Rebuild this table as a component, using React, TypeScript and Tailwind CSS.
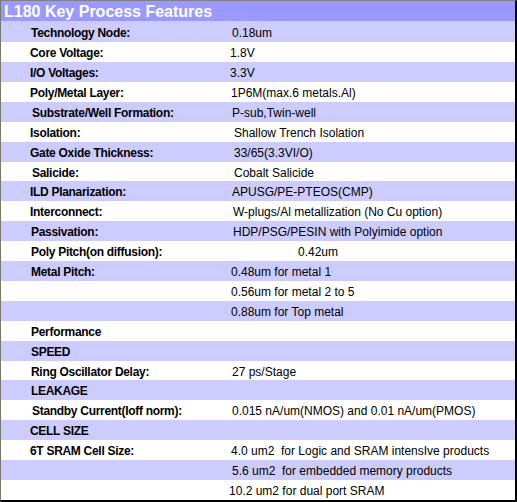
type Row = {
  label?: string;
  value?: string;
  h: string;
  lx: string;
  vx: string;
};

const rows: Row[] = [
  { label: "Technology Node:", value: "0.18um", h: "h-[21px]", lx: "pl-[30px]", vx: "pl-[2px]" },
  { label: "Core Voltage:", value: "1.8V", h: "h-[20px]", lx: "pl-[29px]", vx: "pl-0" },
  { label: "I/O Voltages:", value: "3.3V", h: "h-[20px]", lx: "pl-[29px]", vx: "pl-0" },
  { label: "Poly/Metal Layer:", value: "1P6M(max.6 metals.Al)", h: "h-[20px]", lx: "pl-[29px]", vx: "pl-[1px]" },
  { label: "Substrate/Well Formation:", value: "P-sub,Twin-well", h: "h-[20px]", lx: "pl-[31px]", vx: "pl-[2px]" },
  { label: "Isolation:", value: "Shallow Trench Isolation", h: "h-[20px]", lx: "pl-[29px]", vx: "pl-[4px]" },
  { label: "Gate Oxide Thickness:", value: "33/65(3.3VI/O)", h: "h-[20px]", lx: "pl-[29px]", vx: "pl-[4px]" },
  { label: "Salicide:", value: "Cobalt Salicide", h: "h-[19px]", lx: "pl-[31px]", vx: "pl-[4px]" },
  { label: "ILD Planarization:", value: "APUSG/PE-PTEOS(CMP)", h: "h-[20px]", lx: "pl-[29px]", vx: "pl-[2px]" },
  { label: "Interconnect:", value: "W-plugs/Al metallization (No Cu option)", h: "h-[20px]", lx: "pl-[29px]", vx: "pl-[3px]" },
  { label: "Passivation:", value: "HDP/PSG/PESIN with Polyimide option", h: "h-[20px]", lx: "pl-[30px]", vx: "pl-[3px]" },
  { label: "Poly Pitch(on diffusion):", value: "0.42um", h: "h-[20px]", lx: "pl-[30px]", vx: "pl-[68px]" },
  { label: "Metal Pitch:", value: "0.48um for metal 1", h: "h-[20px]", lx: "pl-[30px]", vx: "pl-[1px]" },
  { value: "0.56um for metal 2 to 5", h: "h-[20px]", lx: "pl-[30px]", vx: "pl-[1px]" },
  { value: "0.88um for Top metal", h: "h-[20px]", lx: "pl-[30px]", vx: "pl-[1px]" },
  { label: "Performance", h: "h-[20px]", lx: "pl-[30px]", vx: "pl-0" },
  { label: "SPEED", h: "h-[20px]", lx: "pl-[30px]", vx: "pl-0" },
  { label: "Ring Oscillator Delay:", value: "27 ps/Stage", h: "h-[19px]", lx: "pl-[30px]", vx: "pl-[2px]" },
  { label: "LEAKAGE", h: "h-[20px]", lx: "pl-[30px]", vx: "pl-0" },
  { label: "Standby Current(Ioff norm):", value: "0.015 nA/um(NMOS) and 0.01 nA/um(PMOS)", h: "h-[20px]", lx: "pl-[31px]", vx: "pl-[2px]" },
  { label: "CELL SIZE", h: "h-[20px]", lx: "pl-[29px]", vx: "pl-0" },
  { label: "6T SRAM Cell Size:", value: "4.0 um2  for Logic and SRAM intensIve products", h: "h-[20px]", lx: "pl-[29px]", vx: "pl-[1px]" },
  { value: "5.6 um2  for embedded memory products", h: "h-[20px]", lx: "pl-[29px]", vx: "pl-[2px]" },
  { value: "10.2 um2 for dual port SRAM", h: "h-[20px]", lx: "pl-[29px]", vx: "pl-0 -ml-[1px]" },
];

export default function App() {
  return (
    <div className="w-[517px] h-[502px] overflow-hidden bg-white border-l border-t border-l-[#77776a] border-t-[#808080] border-r-2 border-b-2 border-r-black border-b-black flex flex-col font-['Liberation_Sans',Arial,sans-serif]">
      <div className="h-[20px] shrink-0 bg-[#9999ff] flex items-center pl-[3px] pt-[1px]">
        <h1 className="text-[16px] font-bold text-white leading-none">L180 Key Process Features</h1>
      </div>
      {rows.map((row, i) => (
        <div
          key={i}
          className={`${row.h} shrink-0 flex items-center pt-[2px] text-black ${i % 2 === 0 ? "bg-[#ccccff]" : "bg-white"}`}
        >
          <div className={`${row.lx} w-[229px] shrink-0 text-[12px] font-bold tracking-[-0.3px] leading-none`}>
            {row.label}
          </div>
          {row.value ? (
            <div className={`${row.vx} text-[12px] leading-none whitespace-pre`}>{row.value}</div>
          ) : null}
        </div>
      ))}
    </div>
  );
}
